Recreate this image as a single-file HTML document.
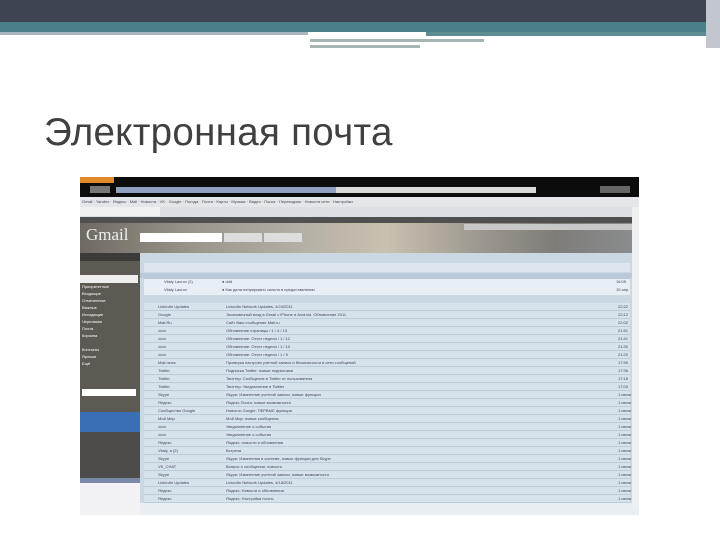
<!DOCTYPE html>
<html><head><meta charset="utf-8"><style>
body{margin:0;width:720px;height:540px;background:#fff;position:relative;overflow:hidden;font-family:"Liberation Sans",sans-serif}
.a{position:absolute}
.t{font-size:4px;color:#445;white-space:nowrap;line-height:8px}
</style></head><body>
<div class="a" style="left:0;top:0;width:720px;height:22px;background:#3f4452"></div>
<div class="a" style="left:0;top:22px;width:720px;height:10px;background:#4a8088"></div>
<div class="a" style="left:0;top:32px;width:308px;height:3px;background:#a6b6bb"></div>
<div class="a" style="left:426px;top:32px;width:280px;height:4px;background:#5d8d92"></div>
<div class="a" style="left:310px;top:39px;width:174px;height:3px;background:#a9b5b5"></div>
<div class="a" style="left:310px;top:45px;width:110px;height:3px;background:#a9b5b5"></div>
<div class="a" style="left:706px;top:0;width:14px;height:48px;background:#c4c6cf"></div>
<div class="a" style="left:44px;top:111px;font-size:38.5px;color:#404040;letter-spacing:0.3px">Электронная почта</div>

<div class="a" style="left:80px;top:177px;width:559px;height:338px;background:#c9d8e3;overflow:hidden">
 <div class="a" style="left:0;top:0;width:559px;height:20px;background:#0c0c0c"></div>
 <div class="a" style="left:0;top:0;width:34px;height:6px;background:#e08a2a"></div>
 <div class="a" style="left:10px;top:9px;width:20px;height:7px;background:#777"></div>
 <div class="a" style="left:36px;top:10px;width:220px;height:6px;background:#8fa0c0"></div>
 <div class="a" style="left:256px;top:10px;width:200px;height:6px;background:#d8d8d8"></div>
 <div class="a" style="left:520px;top:9px;width:30px;height:7px;background:#666"></div>
 <div class="a" style="left:0;top:20px;width:559px;height:10px;background:#e4e6ea"></div>
 <div class="a t" style="left:2px;top:21px;line-height:8px">Gmail · Yandex · Яндекс · Mail · Новости · VK · Google · Погода · Почта · Карты · Музыка · Видео · Поиск · Переводчик · Новости сети · Настройки</div>
 <div class="a" style="left:0;top:30px;width:559px;height:10px;background:#dcdfe4"></div>
 <div class="a" style="left:0;top:30px;width:80px;height:9px;background:#f0f0f0"></div>
 <div class="a" style="left:0;top:40px;width:559px;height:6px;background:#505050"></div>
 <div class="a" style="left:0;top:46px;width:559px;height:30px;background:linear-gradient(90deg,#6e6a62,#9a958a 20%,#b5b0a6 40%,#c9c0b0 55%,#a09b92 70%,#7f7c78 85%,#8a8e90)"></div>
 <div class="a" style="left:6px;top:48px;font-size:17px;color:#eee;font-family:'Liberation Serif',serif">Gmail</div>
 <div class="a" style="left:60px;top:56px;width:82px;height:9px;background:#fff"></div>
 <div class="a" style="left:144px;top:56px;width:38px;height:9px;background:#ddd"></div>
 <div class="a" style="left:184px;top:56px;width:38px;height:9px;background:#ddd"></div>
 <div class="a" style="left:384px;top:47px;width:172px;height:6px;background:#c8c8c8"></div>
 <div class="a" style="left:0;top:76px;width:60px;height:262px;background:#5d5953"></div>
 <div class="a" style="left:0;top:76px;width:60px;height:8px;background:#3d3b39"></div>
 <div class="a" style="left:0;top:98px;width:58px;height:8px;background:#eee"></div>
 <div class="a t" style="left:2px;top:106px;color:#fff;line-height:7px">Приоритетные<br>Входящие<br>Отмеченные<br>Важные<br>Исходящие<br>Черновики<br>Почта<br>Корзина<br><br>Контакты<br>Ярлыки<br>Ещё</div>
 <div class="a" style="left:2px;top:212px;width:54px;height:7px;background:#fff"></div>
 <div class="a" style="left:0;top:235px;width:60px;height:20px;background:#3a6eb5"></div>
 <div class="a" style="left:0;top:255px;width:60px;height:46px;background:#4d4c4a"></div>
 <div class="a" style="left:0;top:301px;width:60px;height:5px;background:#7a8aa8"></div>
 <div class="a" style="left:0;top:306px;width:60px;height:32px;background:#f2f2f4"></div>
 <div class="a" style="left:64px;top:86px;width:486px;height:9px;background:#dde6ee"></div>
 <div class="a" style="left:60px;top:96px;width:499px;height:5px;background:#b9c9d8"></div>
 <div class="a" style="left:64px;top:101px;width:486px;height:16px;background:#e7eef4;border-top:1px solid #b8c8d6"></div>
 <div class="a t" style="left:84px;top:101px">Vitaly Lavrov (2)<br>Vitaly Lavrov</div>
 <div class="a t" style="left:142px;top:101px">● ddd<br>● Как дела непрерывно сильно в предоставлении</div>
 <div class="a t" style="left:536px;top:101px">16:05<br>15 апр.</div>
 <div class="a" style="left:64px;top:126px;width:486px;height:200px;background:repeating-linear-gradient(180deg,#d6e2ec 0,#d6e2ec 7px,#bccbd8 7px,#bccbd8 8px)"></div>
 <div class="a t" style="left:78px;top:126px">LinkedIn Updates<br>Google<br>Mail.Ru<br>xxxx<br>xxxx<br>xxxx<br>xxxx<br>Mail.news<br>Twitter<br>Twitter<br>Twitter<br>Skype<br>Яндекс<br>Сообщество Google<br>Мой Мир<br>xxxx<br>xxxx<br>Яндекс<br>Vitaly, я (2)<br>Skype<br>VK_CHAT<br>Skype<br>LinkedIn Updates<br>Яндекс<br>Яндекс</div>
 <div class="a t" style="left:146px;top:126px">LinkedIn Network Updates, 4/24/2011<br>Экономичный вход в Gmail с iPhone и Android. Обновление 2011<br>Сайт Ваш сообщение Mail.ru<br>Обновление страницы / 1 / 4 / 13<br>Обновление: Отчет недели / 1 / 12<br>Обновление: Отчет недели / 1 / 10<br>Обновление: Отчет недели / 1 / 9<br>Проверка настроек учетной записи и безопасности в сети сообщений<br>Подписка Twitter: новые подписчики<br>Твиттер: Сообщение в Twitter от пользователя<br>Твиттер: Уведомление в Twitter<br>Skype: Изменение учетной записи, новые функции<br>Яндекс.Почта: новые возможности<br>Новости Google: ПЕРВЫЕ функции<br>Мой Мир: новые сообщения<br>Уведомление о событии<br>Уведомление о событии<br>Яндекс: новости и обновления<br>Встреча<br>Skype: Изменения в системе, новые функции для Skype<br>Вопрос о сообщении, новости<br>Skype: Изменение учетной записи, новые возможности<br>LinkedIn Network Updates, 4/18/2011<br>Яндекс: Новости и обновления<br>Яндекс: Настройки почты</div>
 <div class="a t" style="left:538px;top:126px">22:22<br>22:12<br>22:02<br>21:51<br>21:41<br>21:30<br>21:20<br>17:55<br>17:36<br>17:18<br>17:03<br>1 июля<br>1 июля<br>1 июля<br>1 июля<br>1 июля<br>1 июля<br>1 июля<br>1 июля<br>1 июля<br>1 июля<br>1 июля<br>1 июля<br>1 июля<br>1 июля</div>
 <div class="a" style="left:60px;top:326px;width:499px;height:12px;background:#e9eef2"></div>
 <div class="a" style="left:552px;top:30px;width:7px;height:300px;background:#eef0f2"></div>
</div>
</body></html>
